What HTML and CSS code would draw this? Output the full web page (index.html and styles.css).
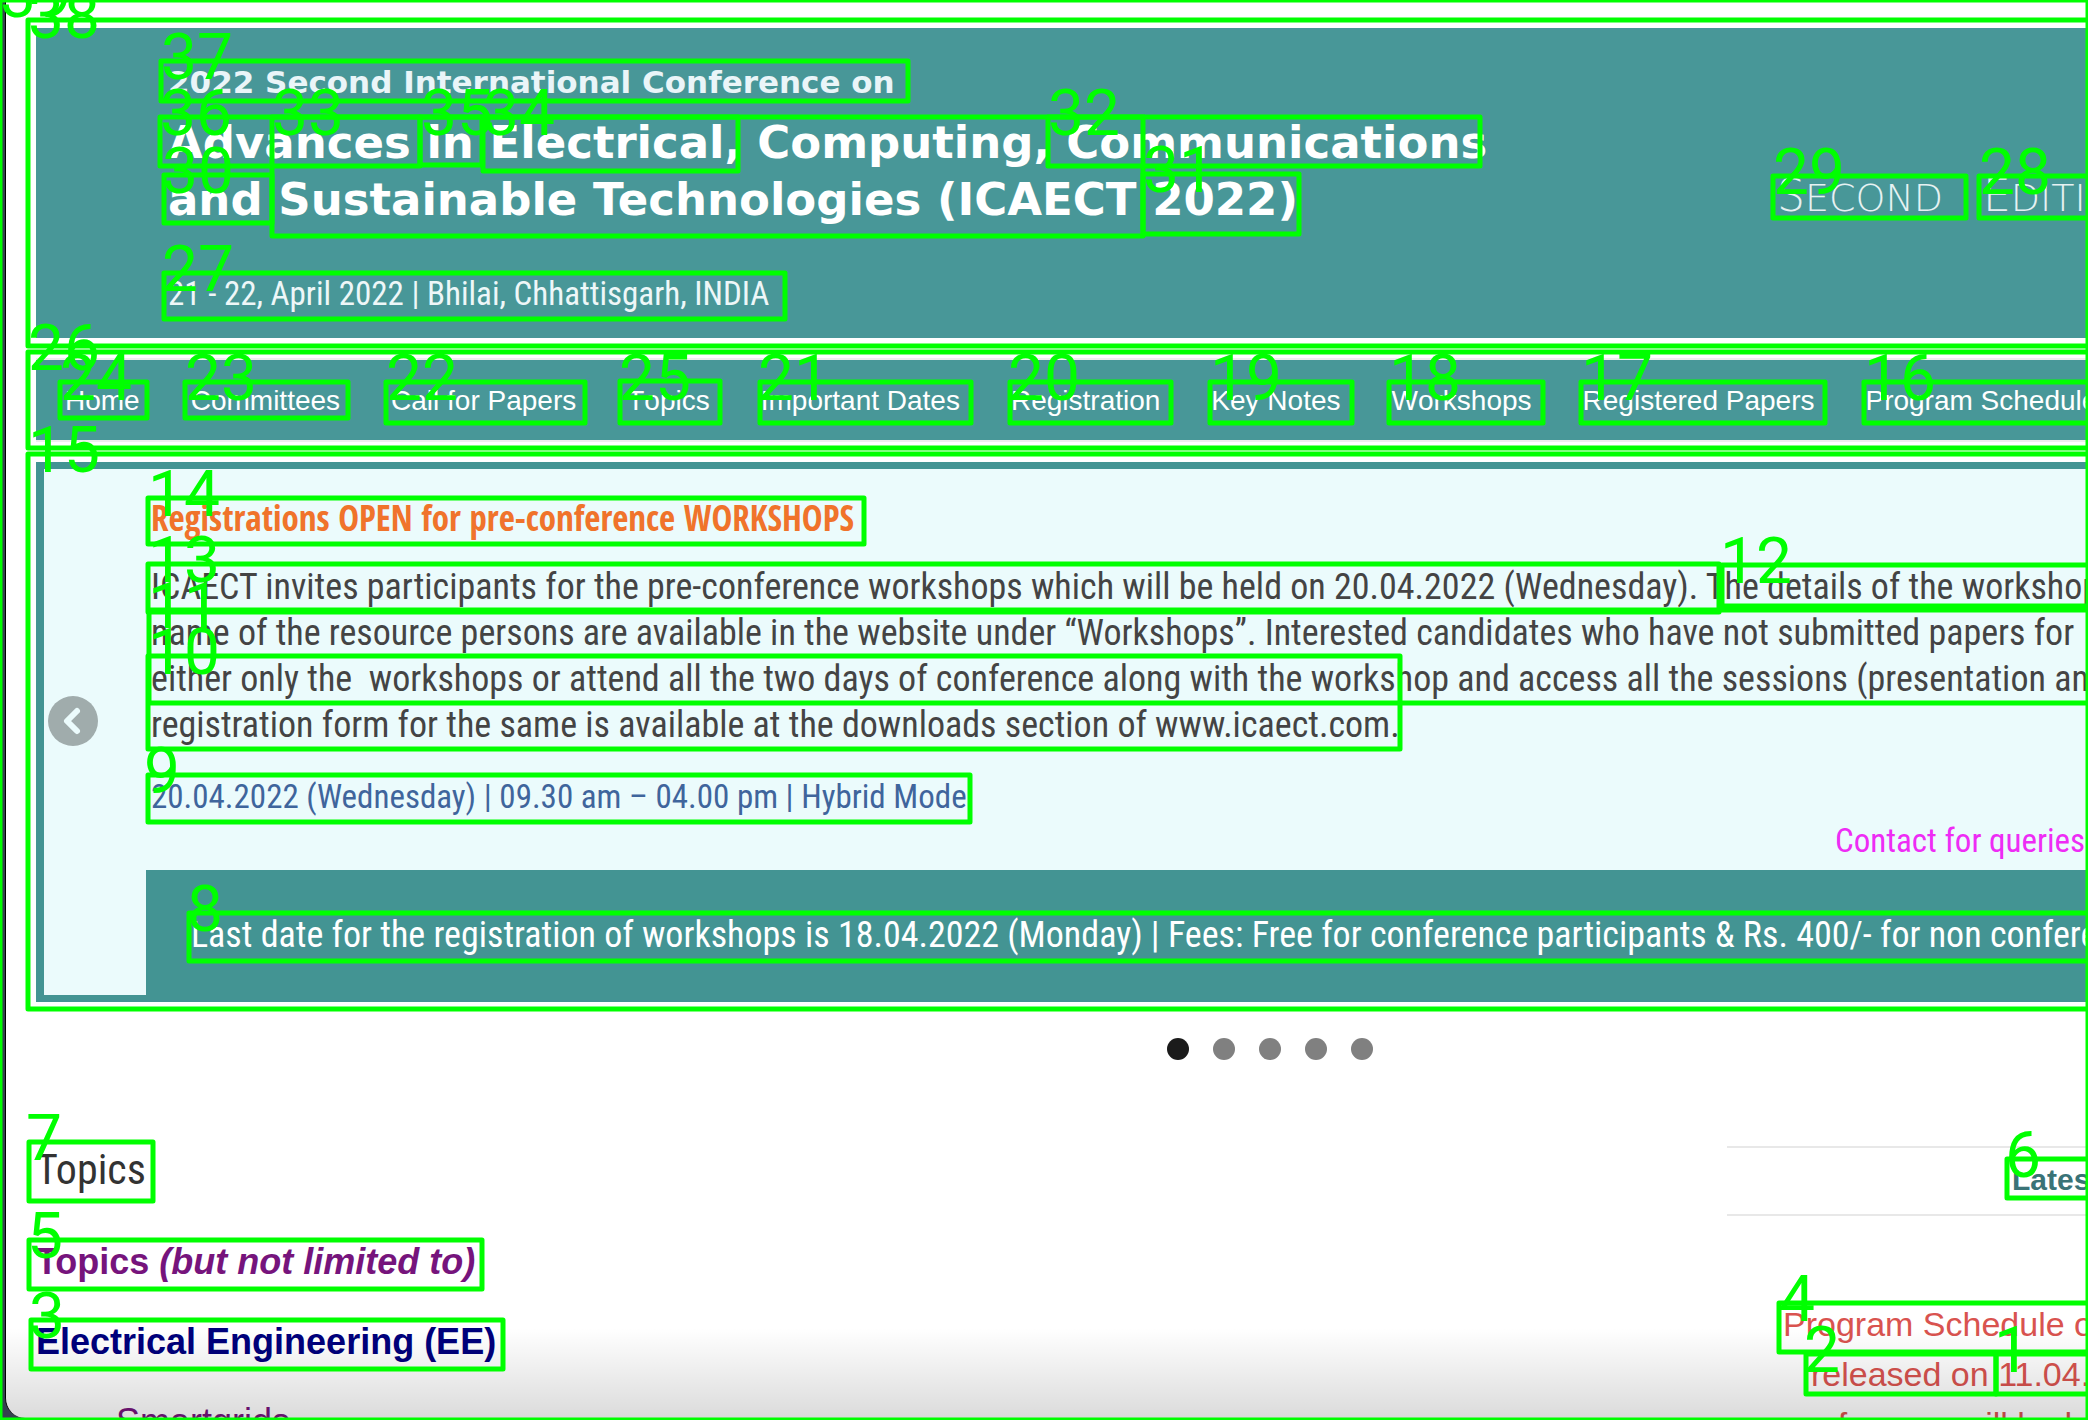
FILE: index.html
```
<!DOCTYPE html>
<html lang="en">
<head>
<meta charset="utf-8">
<title>ICAECT 2022</title>
<link rel="stylesheet" href="styles.css">
</head>
<body>
<div class="window">
  <header class="banner">
    <div class="banner-text">
      <p class="banner-over">2022 Second International Conference on</p>
      <h1 class="banner-title">Advances in Electrical, Computing, Communications<br>and Sustainable Technologies (ICAECT 2022)</h1>
      <p class="banner-date">21 - 22, April 2022 | Bhilai, Chhattisgarh, INDIA</p>
    </div>
    <p class="edition"><span class="edition-word">Second</span><span class="edition-word">Edition</span></p>
  </header>

  <nav class="nav">
    <a href="#home">Home</a>
    <a href="#committees">Committees</a>
    <a href="#call">Call for Papers</a>
    <a href="#topics">Topics</a>
    <a href="#dates">Important Dates</a>
    <a href="#registration">Registration</a>
    <a href="#keynotes">Key Notes</a>
    <a href="#workshops">Workshops</a>
    <a href="#papers">Registered Papers</a>
    <a href="#schedule">Program Schedule</a>
  </nav>

  <section class="slider">
    <div class="slide-body">
      <h2 class="slide-title">Registrations OPEN for pre-conference WORKSHOPS</h2>
      <p class="slide-copy">ICAECT invites participants for the pre-conference workshops which will be held on 20.04.2022 (Wednesday). The details of the workshops<br>name of the resource persons are available in the website under “Workshops”. Interested candidates who have not submitted papers for<br>either only the&nbsp; workshops or attend all the two days of conference along with the workshop and access all the sessions (presentation and<br>registration form for the same is available at the downloads section of www.icaect.com.</p>
      <p class="slide-when">20.04.2022 (Wednesday) | 09.30 am – 04.00 pm | Hybrid Mode</p>
      <p class="slide-contact">Contact for queries</p>
    </div>
    <p class="slide-fee">Last date for the registration of workshops is 18.04.2022 (Monday) | Fees: Free for conference participants &amp; Rs. 400/- for non conference</p>
    <button class="slide-prev" type="button" aria-label="Previous slide">
      <svg width="50" height="50" viewBox="0 0 50 50"><circle cx="25" cy="25" r="25" fill="#a0acac"/><path d="M29 15 L19 25 L29 35" fill="none" stroke="#ebfbfc" stroke-width="6" stroke-linecap="round" stroke-linejoin="round"/></svg>
    </button>
  </section>

  <div class="dots">
    <button class="dot dot-on" type="button" aria-label="Slide 1"></button>
    <button class="dot" type="button" aria-label="Slide 2"></button>
    <button class="dot" type="button" aria-label="Slide 3"></button>
    <button class="dot" type="button" aria-label="Slide 4"></button>
    <button class="dot" type="button" aria-label="Slide 5"></button>
  </div>

  <div class="columns">
    <main>
      <h2 class="topics-title">Topics</h2>
      <h3 class="topics-note">Topics <em>(but not limited to)</em></h3>
      <h3 class="topics-group">Electrical Engineering (EE)</h3>
      <ul class="topics-list"><li>Smartgrids</li></ul>
    </main>
    <aside class="news">
      <h2 class="news-title">Latest</h2>
      <p class="news-copy">Program Schedule of<br><span class="news-line">released on 11.04.2022</span><br>conference will be held</p>
    </aside>
  </div>
  <div class="shade"></div>
</div>

<svg class="marks" width="100%" height="100%" aria-hidden="true">
  <rect x="0" y="0" width="100%" height="100%"/><text x="0" y="17">39</text>
  <rect x="28" y="20" width="2100" height="326"/><text x="28" y="38">38</text>
  <rect x="161" y="61" width="747" height="40"/><text x="161" y="79">37</text>
  <rect x="160" y="117" width="260" height="49"/><text x="160" y="135">36</text>
  <rect x="420" y="117" width="62" height="48"/><text x="421" y="135">35</text>
  <rect x="483" y="117" width="255" height="54"/><text x="483" y="135">34</text>
  <path d="M1145 117H272V236H1143V117"/><text x="272" y="135">33</text>
  <rect x="1048" y="117" width="432" height="49"/><text x="1048" y="135">32</text>
  <rect x="1143" y="174" width="156" height="60"/><text x="1143" y="192">31</text>
  <rect x="164" y="175" width="108" height="48"/><text x="162" y="193">30</text>
  <rect x="1773" y="176" width="193" height="42"/><text x="1773" y="194">29</text>
  <rect x="1979" y="176" width="193" height="42"/><text x="1979" y="194">28</text>
  <rect x="164" y="273" width="621" height="46"/><text x="162" y="291">27</text>
  <rect x="28" y="352" width="2100" height="96"/><text x="28" y="370">26</text>
  <rect x="620" y="381" width="100" height="42"/><text x="619" y="400">25</text>
  <rect x="60" y="382" width="87" height="36"/><text x="60" y="400">24</text>
  <rect x="185" y="382" width="163" height="36"/><text x="185" y="400">23</text>
  <rect x="386" y="382" width="199" height="41"/><text x="386" y="400">22</text>
  <rect x="760" y="382" width="211" height="41"/><text x="758" y="400">21</text>
  <rect x="1010" y="382" width="161" height="41"/><text x="1008" y="400">20</text>
  <rect x="1210" y="382" width="142" height="41"/><text x="1210" y="400">19</text>
  <rect x="1389" y="382" width="154" height="41"/><text x="1389" y="400">18</text>
  <rect x="1581" y="382" width="244" height="41"/><text x="1581" y="400">17</text>
  <rect x="1864" y="382" width="264" height="41"/><text x="1864" y="400">16</text>
  <rect x="28" y="454" width="2100" height="555"/><text x="28" y="472">15</text>
  <rect x="148" y="498" width="716" height="46"/><text x="148" y="516">14</text>
  <rect x="148" y="564" width="1571" height="48"/><text x="148" y="582">13</text>
  <rect x="1722" y="565" width="400" height="41"/><text x="1720" y="583">12</text>
  <rect x="149" y="610" width="1980" height="93"/><text x="148" y="628">11</text>
  <rect x="148" y="656" width="1252" height="93"/><text x="148" y="674">10</text>
  <rect x="148" y="775" width="822" height="47"/><text x="144" y="793">9</text>
  <rect x="189" y="913" width="1940" height="48"/><text x="187" y="931">8</text>
  <rect x="29" y="1142" width="124" height="59"/><text x="26" y="1160">7</text>
  <rect x="2007" y="1159" width="120" height="39"/><text x="2005" y="1177">6</text>
  <rect x="29" y="1240" width="453" height="49"/><text x="27" y="1258">5</text>
  <rect x="1779" y="1303" width="340" height="49"/><text x="1779" y="1321">4</text>
  <rect x="31" y="1320" width="472" height="49"/><text x="29" y="1338">3</text>
  <rect x="1806" y="1354" width="190" height="40"/><text x="1804" y="1372">2</text>
  <rect x="1996" y="1354" width="130" height="40"/><text x="1994" y="1372">1</text>
</svg>
</body>
</html>
```
FILE: styles.css
```
* { box-sizing: border-box; margin: 0; padding: 0; }

body {
  height: 100vh;
  overflow: hidden;
  background: #34424e;
  font-family: "Liberation Sans", Arial, sans-serif;
  white-space: nowrap;
}

.window {
  position: relative;
  height: calc(100vh - 2px);
  margin-left: 5px;
  padding: 28px 0 0 30px;
  overflow: hidden;
  border-left: 1px solid #000;
  border-bottom-left-radius: 20px;
  background: #fff;
}

/* Banner */
.banner {
  display: flex;
  padding: 34px 0 22px 132px;
  background: #489798;
  color: #fff;
}
.banner-text { flex: 0 0 1609px; }
.banner-over {
  margin-bottom: 12px;
  font: 700 31px/40px "DejaVu Sans", sans-serif;
  color: #eaf5f8;
}
.banner-title { font: 700 45px/57px "DejaVu Sans", sans-serif; }
.banner-date {
  margin-top: 44px;
  font: 400 33px/44px "Roboto Condensed", Roboto, sans-serif;
  color: #eef7f8;
}
.edition {
  display: flex;
  padding-top: 109px;
  font: 200 38px/50px "DejaVu Sans", sans-serif;
  text-transform: uppercase;
  color: #e6f2f2;
}
.edition-word { flex: 0 0 206px; }
.edition-word::first-letter { font-size: 44px; }

/* Navigation */
.nav {
  display: flex;
  gap: 51px;
  margin-top: 20px;
  padding-left: 29px;
  border: solid #eee;
  border-width: 2px 0;
  background: #489798;
}
.nav a {
  padding-top: 2px;
  font-size: 28px;
  font-kerning: none;
  line-height: 78px;
  color: #fff;
  text-decoration: none;
}

/* Slider */
.slider {
  position: relative;
  margin-top: 20px;
  border: solid #439493;
  border-width: 7px 0 7px 8px;
  background: #ebfbfc;
  font-family: "Roboto Condensed", Roboto, sans-serif;
}
.slide-body { padding: 26px 0 7px 107px; }
.slide-title {
  margin-bottom: 23px;
  font-family: "Open Sans Condensed", "Roboto Condensed", sans-serif;
  font-size: 35px;
  line-height: 46px;
  color: #f0732b;
}
.slide-copy {
  margin-bottom: 27px;
  font-size: 36px;
  line-height: 46px;
  color: #444;
}
.slide-when {
  font-size: 33px;
  line-height: 44px;
  color: #3f659c;
}
.slide-contact {
  padding-left: 1684px;
  font-size: 33px;
  line-height: 44px;
  color: #ee2cf5;
}
.slide-fee {
  margin-left: 102px;
  padding: 42px 0 37px 45px;
  background: #439493;
  font-size: 36px;
  line-height: 46px;
  color: #fff;
}
.slide-prev {
  position: absolute;
  top: 227px;
  left: 4px;
  width: 50px;
  height: 50px;
  border: 0;
  background: none;
}
.slide-prev svg { display: block; }

.dots {
  display: flex;
  gap: 24px;
  padding: 36px 0 0 1131px;
}
.dot {
  width: 22px;
  height: 22px;
  border: 0;
  border-radius: 50%;
  background: #808080;
}
.dot-on { background: #1b1b1b; }

/* Topics and news */
.columns {
  display: grid;
  grid-template-columns: 1fr 361px;
  margin-top: 85px;
}
.topics-title {
  margin-bottom: 47px;
  font: 400 42px/50px "Roboto Condensed", Roboto, sans-serif;
  color: #333;
}
.topics-note {
  margin-bottom: 40px;
  font-size: 36px;
  line-height: 40px;
  color: #76147c;
}
.topics-group {
  margin-bottom: 40px;
  font-size: 36px;
  line-height: 40px;
  color: #00007c;
}
.topics-list {
  padding-left: 80px;
  list-style: none;
  font-size: 36px;
  line-height: 40px;
  color: #76147c;
}
.news-title {
  margin: 1px 0 83px;
  padding: 0 0 2px 285px;
  border: solid #e8e8e8;
  border-width: 2px 0;
  font-size: 30px;
  line-height: 64px;
  color: #3a7377;
}
.news-copy {
  padding-left: 56px;
  font-size: 34px;
  line-height: 50px;
  color: #d9534f;
}
.news-line { padding-left: 28px; }

.shade {
  position: absolute;
  right: 0;
  bottom: 0;
  left: 0;
  height: 90px;
  background: linear-gradient(rgba(0, 0, 0, 0), rgba(0, 0, 0, 0.14));
}

/* Numbered region marks over the page */
.marks {
  position: absolute;
  top: 0;
  left: 0;
  pointer-events: none;
}
.marks rect,
.marks path {
  fill: none;
  stroke: #0f0;
  stroke-width: 5px;
  stroke-linejoin: round;
}
.marks text {
  fill: #0f0;
  font: 400 64px Roboto, sans-serif;
}
```
